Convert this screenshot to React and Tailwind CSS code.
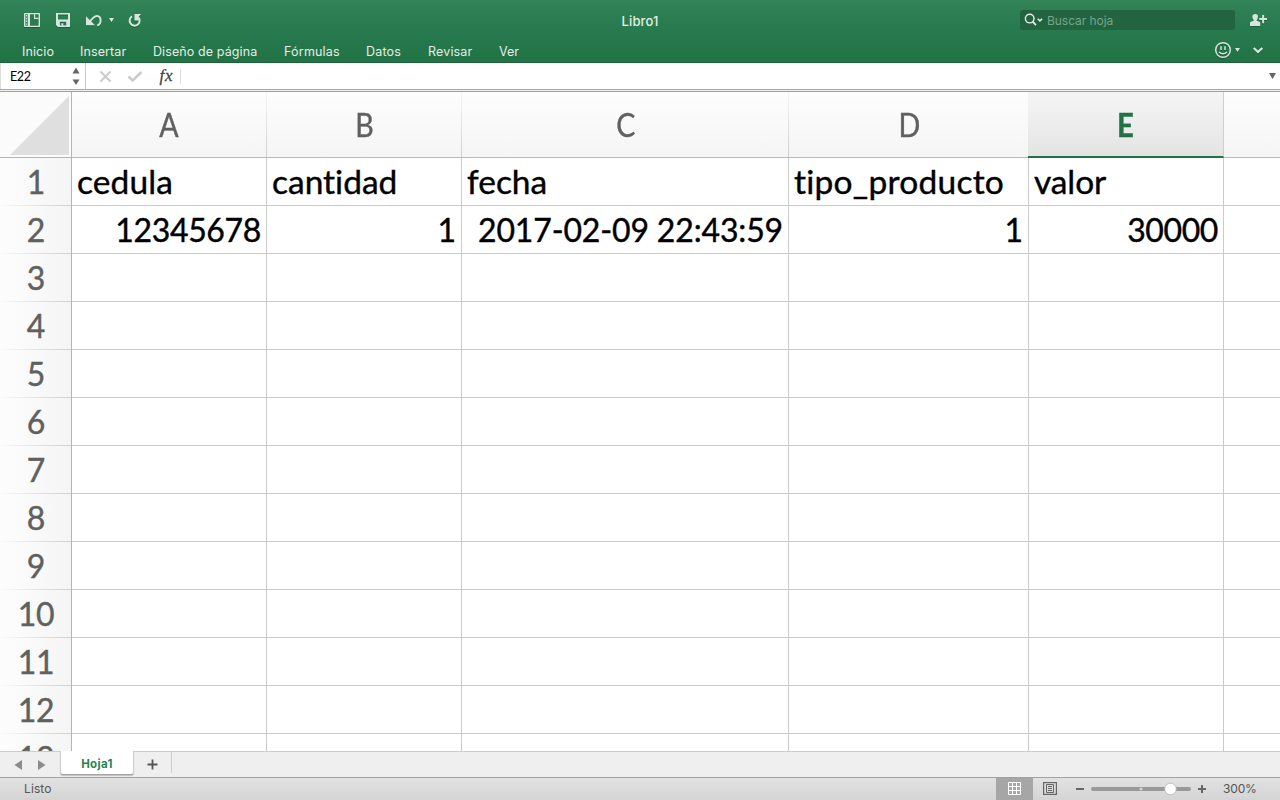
const menus = [
  { label: 'Inicio', cls: 'w-[58px] tracking-[0.1px]' },
  { label: 'Insertar', cls: 'w-[73px] tracking-[0.1px]' },
  { label: 'Diseño de página', cls: 'w-[131px] tracking-[0.1px]' },
  { label: 'Fórmulas', cls: 'w-[82px] tracking-[0.2px]' },
  { label: 'Datos', cls: 'w-[62px] tracking-[0.2px]' },
  { label: 'Revisar', cls: 'w-[71px] tracking-[0.15px]' },
  { label: 'Ver', cls: 'w-[40px] tracking-[0px]' },
];

const columns = ['A', 'B', 'C', 'D', 'E', ''];

const rows = [
  [
    { text: 'cedula', cls: 'tracking-[0.1px]' },
    { text: 'cantidad', cls: 'tracking-[0px]' },
    { text: 'fecha', cls: 'tracking-[0px]' },
    { text: 'tipo_producto', cls: 'tracking-[0.25px]' },
    { text: 'valor', cls: 'tracking-[-0.1px]' },
    {},
  ],
  [
    { text: '12345678', num: true, cls: 'tracking-[-0.35px]' },
    { text: '1', num: true },
    { text: '2017-02-09 22:43:59', num: true, cls: 'tracking-[-0.15px]' },
    { text: '1', num: true },
    { text: '30000', num: true, cls: 'tracking-[-0.4px]' },
    {},
  ],
  ...Array.from({ length: 11 }, () => [{}, {}, {}, {}, {}, {}]),
];

const gridCols = 'grid grid-cols-[72px_195px_195px_327px_240px_195px_56px]';

function QuickAccess() {
  return (
    <svg width="130" height="22" viewBox="0 0 130 22" fill="none" className="drop-shadow-[0_1px_0_rgba(0,0,0,0.25)]">
      <rect x="2" y="4" width="16" height="14" rx="0.8" fill="#d5e6dc" />
      <path d="M3.400 5.200h2.400v11.600H3.400z" fill="#2b7b50" />
      <path d="M4.600 6v10" stroke="#d5e6dc" strokeWidth="1.200" strokeDasharray="1.400 1.400" />
      <path d="M8 5.300h4.600l4 4v7.400H8z" fill="#2b7b50" />
      <path d="M16.600 5.300v4h-1.200L12.600 6.400V5.300z" fill="#2b7b50" />
      <path d="M12.600 5.200v4.100h4" stroke="#d5e6dc" strokeWidth="1.200" />
      <path fill="#d5e6dc" fillRule="evenodd" d="M34 4h14v14H36l-2-2zM36 5.400v5h10v-5zM37.900 12.800V16.600h1.500v-2.400h1.900v2.400h2.900v-3.800z" />
      <path d="M67 14.200C70 9.500 73 7 75 7.100c4.500.4 5 7.300.2 9.600" stroke="#d5e6dc" strokeWidth="2" />
      <path d="M64 7.200v9h9z" fill="#d5e6dc" />
      <path d="M87 9h5l-2.500 4.200z" fill="#d5e6dc" />
      <path d="M110 7.400a5 5 0 1 0 6.600 1.200" stroke="#d5e6dc" strokeWidth="2" />
      <path d="M112.500 5.100h6.700l-2 1.900-.4.400v4.200h-4.300z" fill="#d5e6dc" />
    </svg>
  );
}

function Ribbon() {
  return (
    <header className="h-[63px] bg-linear-to-b from-[#328358] via-[#277a4d] to-[#217346] border-b border-[#1b6339] font-[Inter,sans-serif] text-[#e2eee7]">
      <div className="flex h-10 items-center">
        <div className="w-[510px] pl-[22px]">
          <QuickAccess />
        </div>
        <div className="w-[260px] pt-[2px] text-center text-[13px] leading-5 tracking-[0.1px] font-medium">Libro1</div>
        <div className="flex w-[510px] items-center pl-[250px]">
          <div className="flex h-5 w-[215px] items-center rounded-[3px] bg-[#226340] pl-1">
            <svg width="20" height="14" viewBox="0 0 20 14" fill="none" stroke="#e6f0ea">
              <circle cx="5.700" cy="5.600" r="4.300" strokeWidth="1.400" />
              <path d="M8.700 8.700l3.300 3.500" strokeWidth="1.700" />
              <path d="M13.700 5.700l2.200 2.200 2.200-2.200" strokeWidth="1.500" />
            </svg>
            <span className="ml-[3px] pt-[2px] text-[12px] tracking-[-0.05px] text-[#76a68a]">Buscar hoja</span>
          </div>
          <svg width="18" height="14" viewBox="0 0 18 14" fill="#d5e6dc" className="ml-[14px] drop-shadow-[0_1px_0_rgba(0,0,0,0.25)]">
            <path d="M6.200 1c4 0 3 4.500 1.500 5.900v.9q3.500.7 3.500 2.200v3H1v-3q0-1.500 3.700-2.200v-.9C3.200 5.500 2.200 1 6.200 1z" />
            <path d="M10.200 5h3V2h1.900v3h3v2h-3v3.200h-1.900V7h-3z" />
          </svg>
        </div>
      </div>
      <div className="flex h-[22px] items-center">
        <nav className="flex flex-1 pl-[22px] pt-[2px] text-[12.5px] leading-5">
          {menus.map((m) => (
            <span key={m.label} className={`shrink-0 whitespace-nowrap ${m.cls}`}>{m.label}</span>
          ))}
        </nav>
        <svg width="66" height="20" viewBox="0 0 66 20" fill="none" stroke="#d5e6dc" className="drop-shadow-[0_1px_0_rgba(0,0,0,0.25)]">
          <circle cx="9" cy="9" r="7.300" strokeWidth="1.500" />
          <path d="M7 5.200v3.800M11 5.200v3.800" strokeWidth="1.500" />
          <path d="M5 11q4 3.600 8 0" strokeWidth="1.400" />
          <path d="M21 7h5l-2.500 4z" fill="#d5e6dc" stroke="none" />
          <path d="M39.700 7l4.300 4 4.300-4" strokeWidth="2.300" />
        </svg>
      </div>
    </header>
  );
}

function FormulaBar() {
  return (
    <div className="flex h-[27px] items-center border-b border-[#aaa6aa] bg-white">
      <div className="flex h-full w-[86px] items-center justify-between border-l border-r border-l-[#dcdcdc] border-r-[#c6c6c6] pl-[9px] pr-[5px]">
        <span className="pt-[3px] font-[Lato,sans-serif] text-[12.5px] tracking-[-0.4px] text-black">E22</span>
        <svg width="8" height="20" viewBox="0 0 8 20" fill="#666">
          <path d="M4 1.500l3.500 6h-7zM4 19l3.500-5.600h-7z" />
        </svg>
      </div>
      <svg width="96" height="26" viewBox="0 0 96 26" fill="none" stroke="#ccc" strokeWidth="2.200">
        <path d="M14.500 8.500l10 10M24.500 8.500l-10 10" />
        <path d="M42.500 13.500l4.200 4L55.500 9" strokeWidth="2.600" />
        <path d="M94.500 6v15" stroke="#ddd" strokeWidth="1" />
        <text x="73.500" y="18" fill="#444" stroke="#444" strokeWidth="0.300" fontFamily="Liberation Serif, serif" fontStyle="italic" fontSize="17" letterSpacing="0.900">fx</text>
      </svg>
      <svg width="8" height="6" viewBox="0 0 8 6" fill="#666" className="ml-auto mr-[4px]">
        <path d="M1 0h7L4.500 6z" />
      </svg>
    </div>
  );
}

function Sheet() {
  return (
    <main className="h-[659px] overflow-hidden bg-white font-[Lato,sans-serif] text-[31.5px] [font-variant-ligatures:none] [-webkit-text-stroke:0.4px_currentColor]">
      <div className={`${gridCols} h-[66px]`}>
        <div className="flex justify-end border-r border-b border-[#b4b4b4] bg-[#fbfbfb] pr-[2px] pt-[4px]">
          <svg width="60" height="60" viewBox="0 0 60 60" fill="#dfdfdf"><path d="M60 0v59H1z" /></svg>
        </div>
        {columns.map((c) =>
          c === 'E' ? (
            <div key={c} className="-ml-px flex items-center justify-center border-r border-b-2 border-r-[#cfcfcf] border-b-[#217346] bg-linear-to-b from-[#f5f5f5] to-[#e4e4e4] pt-[3px] font-bold text-[#217346]"><span className="inline-block scale-x-90 text-[32.5px]">{c}</span></div>
          ) : (
            <div key={c} className="flex border-b border-[#b9b9b9] bg-linear-to-b from-[#fdfdfd] to-[#f5f5f5]">
              <div className="flex flex-1 items-center justify-center pt-[2px] pl-px text-[#606060]"><span className="inline-block scale-x-[0.88] text-[32.5px]">{c}</span></div>
              {c && <div className="w-px bg-linear-to-b from-[#f5f5f5] to-[#cfcfcf]" />}
            </div>
          )
        )}
      </div>
      {rows.map((row, r) => (
        <div key={r} className={`${gridCols} h-12`}>
          <div className="flex flex-col border-r border-[#b4b4b4] bg-linear-to-r from-[#fdfdfd] to-[#f5f5f5]">
            <div className="flex flex-1 items-center justify-center pt-px pl-px text-[32px] leading-none tracking-[-0.3px] text-[#606060]">{r + 1}</div>
            <div className="h-px bg-linear-to-r from-[#fafafa] to-[#cfcfcf]" />
          </div>
          {row.map((cell, i) => (
            <div
              key={i}
              className={`flex items-center overflow-hidden whitespace-nowrap border-b border-[#cbcbcb] px-[5px] leading-[44px] text-black ${i < 5 ? 'border-r' : ''} ${cell.num ? 'justify-end pt-px text-[32px]' : 'pb-px text-[33.5px]'} ${cell.cls || ''}`}
            >
              {cell.text}
            </div>
          ))}
        </div>
      ))}
    </main>
  );
}

function SheetTabs() {
  return (
    <div className="flex h-[27px] border-t border-b border-t-[#cccccc] border-b-[#a2a2a2] bg-[#efefef]">
      <svg width="60" height="25" viewBox="0 0 60 25" fill="#8b8b8b">
        <path d="M14.500 13l7.500-5v10zM45.500 13l-7.500-5v10z" />
      </svg>
      <div className="-mt-px flex h-[24px] w-[74px] items-center justify-center rounded-b-[3px] border-x border-b border-x-[#cfcfcf] border-b-[#a5a5a5] bg-white pt-[4px] font-[Inter,sans-serif] text-[11.5px] font-bold tracking-[0.35px] text-[#1f8650] shadow-[0_1px_1px_rgba(0,0,0,0.2)]">Hoja1</div>
      <div className="flex h-[21px] w-[38px] items-center justify-center border-r border-[#cdcdcd] pt-[3px]">
        <svg width="11" height="11" viewBox="0 0 11 11" stroke="#555" strokeWidth="1.800"><path d="M5.500 0.500v10M0.500 5.500h10" /></svg>
      </div>
    </div>
  );
}

function StatusBar() {
  return (
    <footer className="flex h-[22px] items-center bg-linear-to-b from-[#e2e2e2] to-[#d4d4d4] font-[Inter,sans-serif] text-[12px] text-[#555]">
      <span className="flex-1 pl-6 tracking-[0.1px]">Listo</span>
      <div className="flex h-full w-[37px] items-center justify-center bg-[#a6a6a6]">
        <svg width="13" height="13" viewBox="0 0 13 13" fill="none" stroke="#fff" className="-mt-px">
          <path d="M.5.5h12v12H.5zM4.500.5v12M8.500.5v12M.5 4.500h12M.5 8.500h12" />
        </svg>
      </div>
      <svg width="180" height="22" viewBox="0 0 180 22" fill="none" stroke="#666">
        <rect x="10.600" y="4.600" width="12.800" height="11.800" strokeWidth="1.200" />
        <path d="M13.500 6.500h7v8h-7zM15 8.500h4M15 10.500h4M15 12.500h4" />
        <path d="M43 11h8M165 11h8M169 7v8" strokeWidth="2" />
        <path d="M60 11h96" stroke="#999" strokeWidth="4" strokeLinecap="round" />
        <circle cx="108" cy="11" r="1.600" fill="#d4d4d4" stroke="none" />
        <circle cx="137.500" cy="11" r="5.800" fill="#fff" stroke="#b5b5b5" strokeWidth="0.800" />
      </svg>
      <span className="w-[67px] pl-[10px] tracking-[-0.15px]">300%</span>
    </footer>
  );
}

export default function App() {
  return (
    <div className="flex h-[800px] w-[1280px] flex-col overflow-hidden bg-white">
      <Ribbon />
      <FormulaBar />
      <div className="h-[2px] border-b border-[#a0a0a0] bg-[#f0f0f0]" />
      <Sheet />
      <SheetTabs />
      <StatusBar />
    </div>
  );
}
